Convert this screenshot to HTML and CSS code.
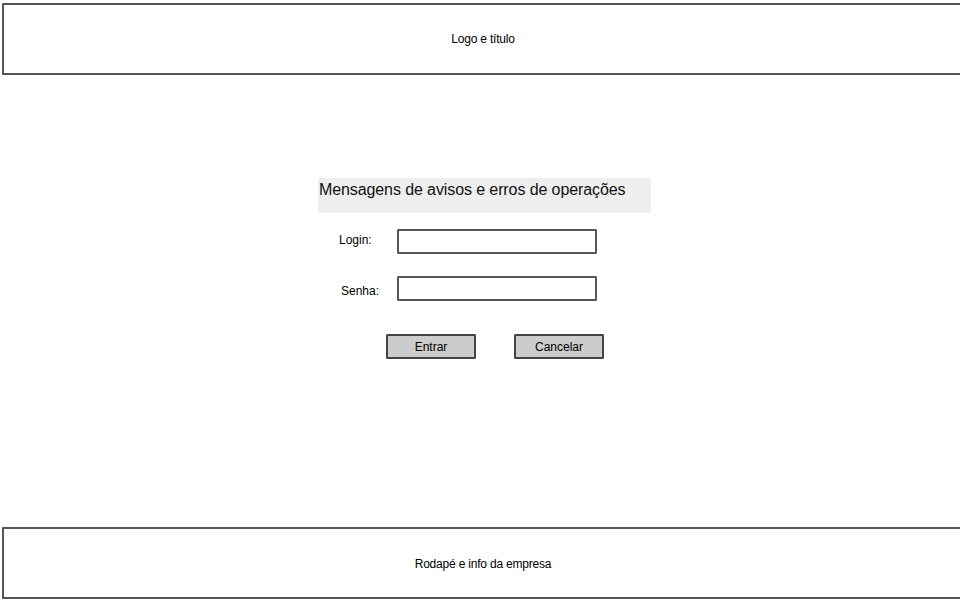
FILE: index.html
```html
<!DOCTYPE html>
<html lang="pt">
<head>
<meta charset="utf-8">
<title>Login</title>
<link rel="stylesheet" href="styles.css">
</head>
<body>
<div class="page">
  <header class="band header">Logo e título</header>
  <main class="main">
    <div class="panel">
      <div class="messages">Mensagens de avisos e erros de operações</div>
      <div class="row">
        <label class="label label-login">Login:</label>
        <div class="input"></div>
      </div>
      <div class="row row-senha">
        <label class="label label-senha">Senha:</label>
        <div class="input"></div>
      </div>
      <div class="actions">
        <div class="btn">Entrar</div>
        <div class="btn">Cancelar</div>
      </div>
    </div>
  </main>
  <footer class="band footer">Rodapé e info da empresa</footer>
</div>
</body>
</html>
```
FILE: styles.css
```css
html, body {
  margin: 0;
  padding: 0;
  background: #ffffff;
}
body {
  font-family: "Liberation Sans", Arial, sans-serif;
  font-size: 12px;
  color: #000;
  overflow: hidden;
}
.page {
  width: 960px;
  height: 600px;
  display: flex;
  flex-direction: column;
}
.band {
  box-sizing: border-box;
  height: 72px;
  margin-left: 2px;
  width: 962px;
  border: 2px solid #555;
  border-right: none;
  border-radius: 1px 0 0 2px / 2px 0 0 1px;
  display: flex;
  align-items: center;
  justify-content: center;
  padding-right: 2px;
  font-size: 12px;
  letter-spacing: -0.2px;
}
.header {
  margin-top: 3px;
  padding-bottom: 1px;
}
.footer {
  margin-top: auto;
  margin-bottom: 1px;
  padding-top: 1px;
}
.main {
  padding-top: 103px;
}
.panel {
  margin-left: 318px;
  width: 333px;
}
.messages {
  height: 35px;
  box-sizing: border-box;
  background: #eeeeee;
  padding: 2px 0 0 1px;
  font-size: 16px;
  line-height: 20px;
  letter-spacing: -0.1px;
  color: #111;
}
.row {
  display: flex;
  align-items: center;
  margin-top: 16px;
  height: 25px;
}
.row-senha {
  margin-top: 22px;
}
.label {
  width: 79px;
  box-sizing: border-box;
  font-size: 12px;
}
.label-login {
  padding-left: 21px;
  margin-top: -4px;
}
.label-senha {
  padding-left: 23px;
  margin-top: 4px;
}
.input {
  box-sizing: border-box;
  width: 200px;
  height: 25px;
  border: 2px solid #555;
  border-radius: 1px 2px 1px 2px / 2px 1px 2px 1px;
  background: #fff;
}
.actions {
  display: flex;
  gap: 38px;
  margin-top: 33px;
  padding-left: 68px;
}
.btn {
  box-sizing: border-box;
  width: 90px;
  height: 25px;
  background: #cccccc;
  border: 2px solid #444;
  border-radius: 2px 1px 2px 1px / 1px 2px 1px 2px;
  display: flex;
  align-items: center;
  justify-content: center;
  font-size: 12px;
  padding-top: 1px;
}
```
